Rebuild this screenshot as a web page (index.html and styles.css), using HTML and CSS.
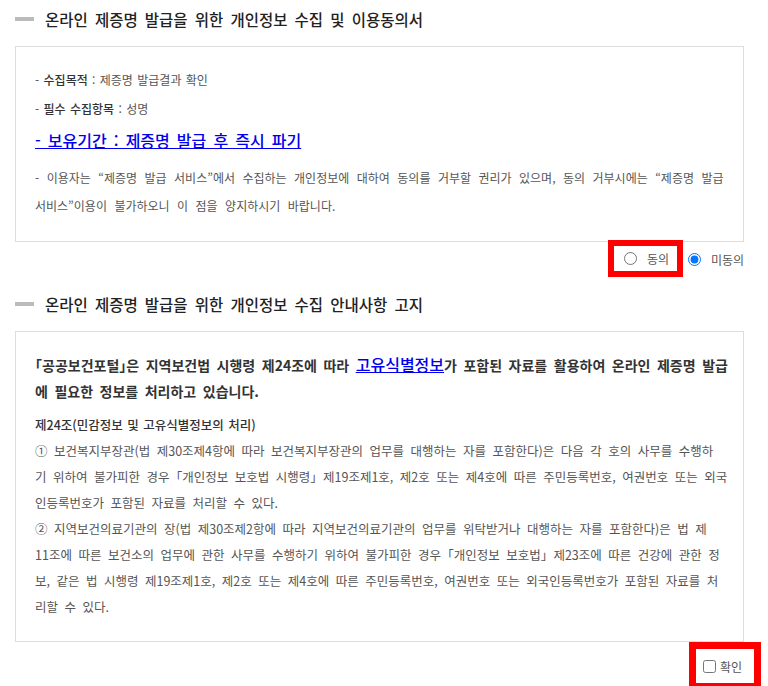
FILE: index.html
```html
<!DOCTYPE html>
<html lang="ko">
<head>
  <meta charset="UTF-8">
  <meta name="viewport" content="width=device-width, initial-scale=1.0">
  <title>개인정보 수집 및 이용동의</title>
  <link rel="stylesheet" href="styles.css">
</head>
<body>

  <div class="agree-wrap">

    <!-- 개인정보 수집 및 이용동의 -->
    <h3 class="tit-bar">온라인 제증명 발급을 위한 개인정보 수집 및 이용동의서</h3>
    <div class="agree-box">
      <ul class="info-list">
        <li>- <strong>수집목적</strong> : 제증명 발급결과 확인</li>
        <li>- <strong>필수 수집항목</strong> : 성명</li>
      </ul>
      <p class="keep-term"><a href="#">- 보유기간 : 제증명 발급 후 즉시 파기</a></p>
      <p class="desc">- 이용자는 “제증명 발급 서비스”에서 수집하는 개인정보에 대하여 동의를 거부할 권리가 있으며, 동의 거부시에는 “제증명 발급 서비스”이용이 불가하오니 이 점을 양지하시기 바랍니다.</p>
    </div>
    <div class="agree-check">
      <label class="mark"><input type="radio" name="agree1"> 동의</label>
      <label><input type="radio" name="agree1" checked> 미동의</label>
    </div>

    <!-- 개인정보 수집 안내사항 고지 -->
    <h3 class="tit-bar">온라인 제증명 발급을 위한 개인정보 수집 안내사항 고지</h3>
    <div class="agree-box notice">
      <p class="lead">「공공보건포털」은 지역보건법 시행령 제24조에 따라 <a href="#">고유식별정보</a>가 포함된 자료를 활용하여 온라인 제증명 발급에 필요한 정보를 처리하고 있습니다.</p>
      <p class="law-tit">제24조(민감정보 및 고유식별정보의 처리)</p>
      <p>① 보건복지부장관(법 제30조제4항에 따라 보건복지부장관의 업무를 대행하는 자를 포함한다)은 다음 각 호의 사무를 수행하<br>기 위하여 불가피한 경우 「개인정보 보호법 시행령」 제19조제1호, 제2호 또는 제4호에 따른 주민등록번호, 여권번호 또는 외국<br>인등록번호가 포함된 자료를 처리할 수 있다.</p>
      <p>② 지역보건의료기관의 장(법 제30조제2항에 따라 지역보건의료기관의 업무를 위탁받거나 대행하는 자를 포함한다)은 법 제<br>11조에 따른 보건소의 업무에 관한 사무를 수행하기 위하여 불가피한 경우 「개인정보 보호법」 제23조에 따른 건강에 관한 정<br>보, 같은 법 시행령 제19조제1호, 제2호 또는 제4호에 따른 주민등록번호, 여권번호 또는 외국인등록번호가 포함된 자료를 처<br>리할 수 있다.</p>
    </div>
    <div class="agree-check">
      <label class="mark chk"><input type="checkbox"> 확인</label>
    </div>

  </div>

</body>
</html>
```

FILE: styles.css
```css
/* Base styling */
* {
  margin: 0;
  padding: 0;
  box-sizing: border-box;
}

body {
  background-color: #fff;
  font-family: "Noto Sans CJK KR", "Noto Sans", sans-serif;
  color: #555;
}

ul {
  list-style: none;
}

.agree-wrap {
  width: 744px;
  padding-left: 15px;
}

/* Section title with grey bar */
.tit-bar {
  display: flex;
  align-items: center;
  height: 38px;
  font-size: 15.5px;
  font-weight: 500;
  word-spacing: 2.8px;
  color: #222;
}

.tit-bar::before {
  content: "";
  width: 19px;
  height: 4px;
  margin-right: 11px;
  background-color: #bbb;
}

/* Agreement box */
.agree-box {
  margin-top: 8px;
  padding: 18px 10px 21px 19px;
  border: 1px solid #ddd;
  font-size: 12px;
  line-height: 29px;
  font-feature-settings: "halt";
}

.info-list li {
  word-spacing: 1px;
}

.info-list strong {
  font-weight: 500;
  color: #333;
}

.keep-term {
  font-size: 16px;
  line-height: 34px;
  font-weight: 500;
  word-spacing: 2.6px;
}

.keep-term a {
  color: #0000ee;
}

.desc {
  margin-top: 7px;
  line-height: 28px;
  word-spacing: 4.1px;
}

/* Notice box */
.notice {
  padding: 20px 10px 21px 19px;
  font-size: 12.5px;
  line-height: 26px;
  word-spacing: 3px;
}

.notice .lead {
  margin-bottom: 8px;
  font-size: 14px;
  font-weight: 700;
  word-spacing: 2.6px;
  color: #333;
}

.notice .lead a {
  font-size: 16px;
  font-weight: 500;
  line-height: 1;
  word-spacing: 0;
  color: #0000ee;
}

.notice .law-tit {
  font-weight: 500;
  word-spacing: 1px;
  color: #333;
}

/* Radio / checkbox row */
.agree-check {
  display: flex;
  justify-content: flex-end;
  align-items: center;
  gap: 5px;
  margin-bottom: 8px;
  font-size: 12px;
  color: #555;
}

.agree-check label {
  display: flex;
  align-items: center;
  gap: 10px;
}

.agree-check input {
  margin: 0;
}

.agree-check .mark {
  width: 75px;
  height: 37px;
  margin-top: -2px;
  padding-left: 10px;
  border: 6px solid #ff0000;
}

.agree-check .chk {
  width: 72px;
  height: 48px;
  margin-top: 0;
  margin-right: -17px;
  padding-left: 7px;
  gap: 4px;
  border-width: 7px;
}
```
